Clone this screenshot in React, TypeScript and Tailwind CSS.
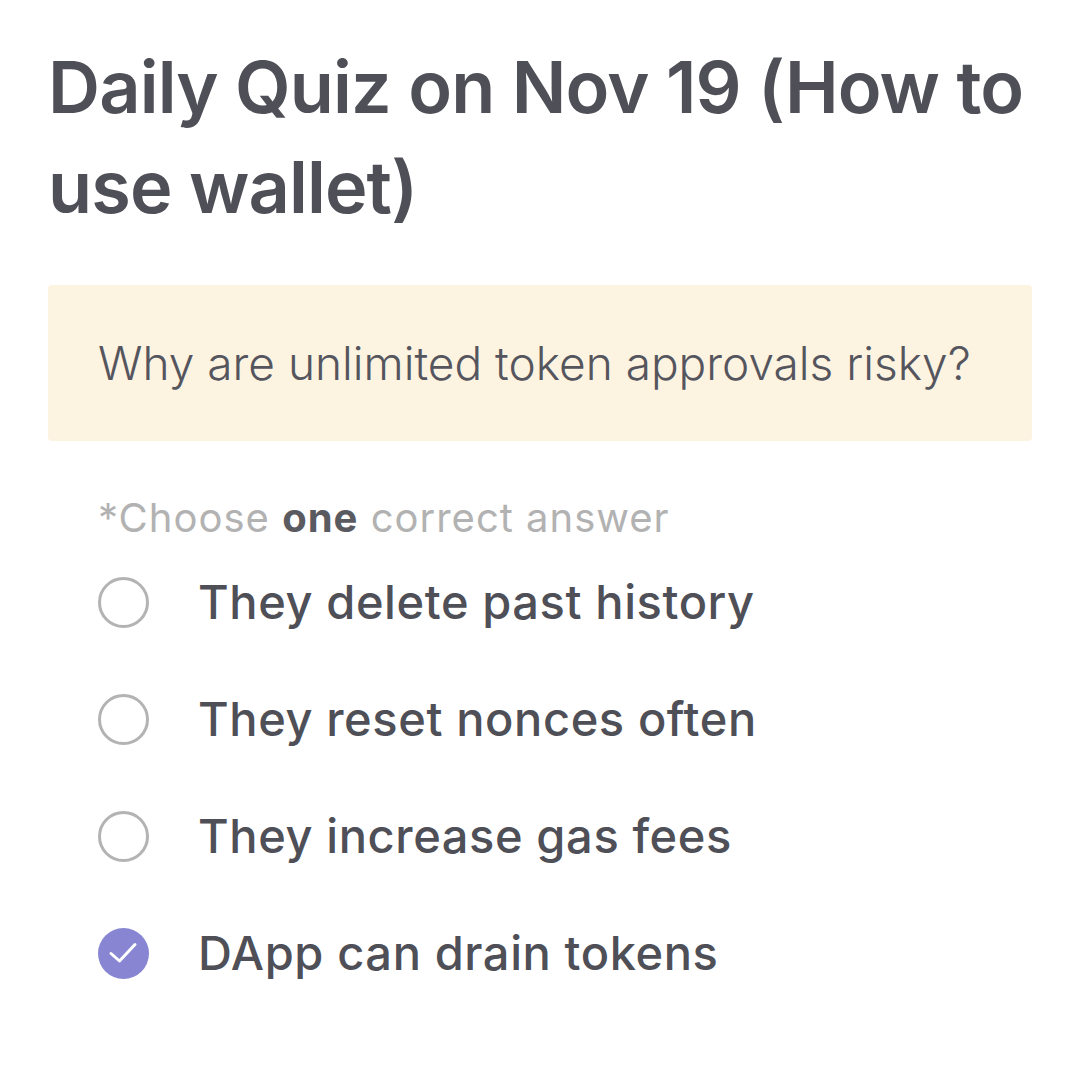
const options = [
  { label: "They delete past history", selected: false },
  { label: "They reset nonces often", selected: false },
  { label: "They increase gas fees", selected: false },
  { label: "DApp can drain tokens", selected: true },
];

export default function App() {
  return (
    <div className="min-h-[1077px] w-[1080px] bg-white px-12 pt-[37px] font-['Inter',sans-serif] text-[#4f4f57]">
      <h1 className="text-[72px] font-semibold leading-[100px] tracking-[-0.85px]">
        Daily Quiz on Nov 19 (How to use wallet)
      </h1>

      <div className="mt-[48px] flex h-[156px] items-center rounded bg-[#fdf3e1] px-[50px]">
        <p className="text-[46px] font-light text-[#55555e]">Why are unlimited token approvals risky?</p>
      </div>

      <div className="px-[50px] pt-[53px]">
        <p className="text-[40px] leading-[48px] tracking-[1px] text-[#b2b2b2]">
          *Choose <span className="font-bold text-[#5a5a61]">one</span> correct answer
        </p>

        <div className="mt-[35px] flex flex-col gap-[66px]">
          {options.map((o) => (
            <div key={o.label} className="flex h-[51px] items-center gap-[49px]">
              {o.selected ? (
                <div className="h-[51px] w-[51px] shrink-0 rounded-full bg-[#8886d2]">
                  <svg viewBox="0 0 51 51" className="h-[51px] w-[51px]" fill="none">
                    <path
                      d="M13 25.5 L21.5 33 L37 16.5"
                      stroke="white"
                      strokeWidth="3"
                      strokeLinecap="round"
                      strokeLinejoin="round"
                    />
                  </svg>
                </div>
              ) : (
                <div className="h-[51px] w-[51px] shrink-0 rounded-full border-[3px] border-[#b3b3b3]" />
              )}
              <span className="text-[47px] font-medium tracking-[0.6px] text-[#4f4f57]">{o.label}</span>
            </div>
          ))}
        </div>
      </div>
    </div>
  );
}
